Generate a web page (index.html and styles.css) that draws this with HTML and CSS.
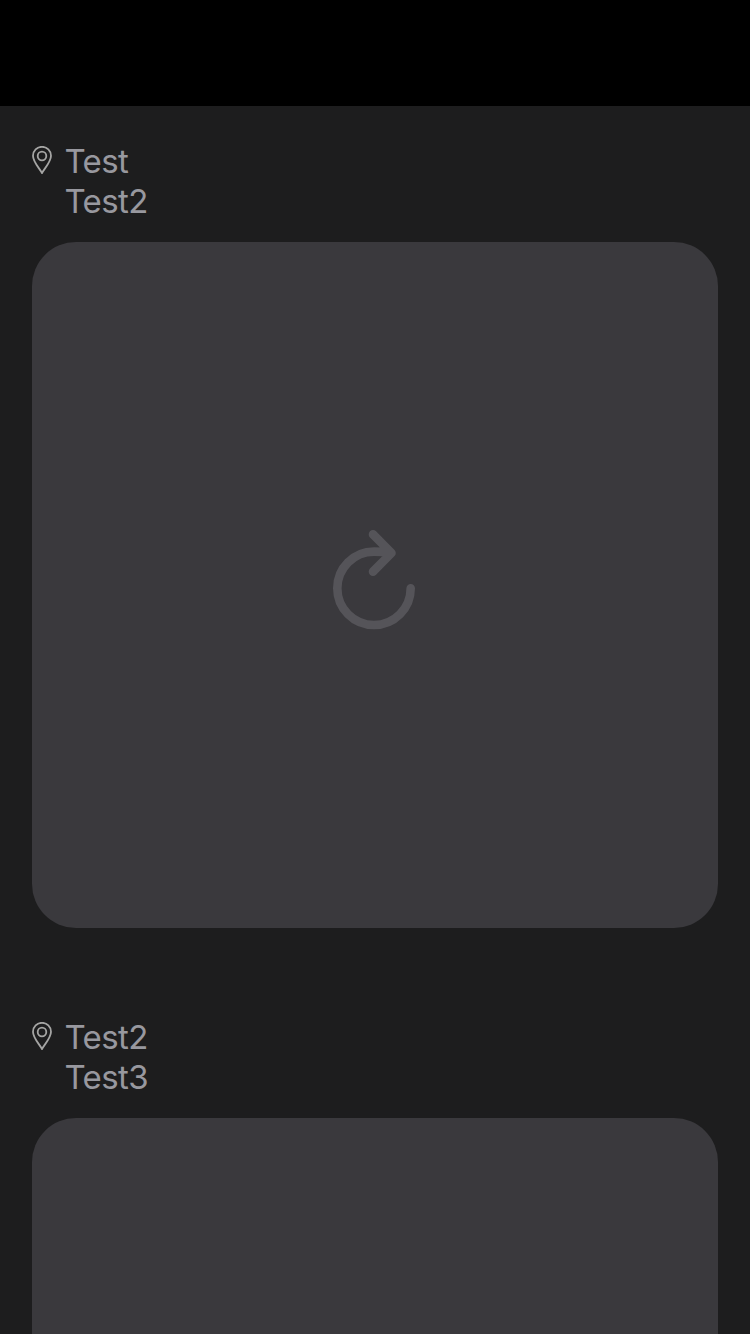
FILE: index.html
```html
<!DOCTYPE html>
<html lang="en">
<head>
<meta charset="utf-8">
<title>Locations</title>
<link rel="stylesheet" href="styles.css">
</head>
<body>
<header class="top-bar"></header>
<main class="feed">
  <article class="post">
    <div class="location">
      <svg class="pin" viewBox="0 0 20 28"><path d="M10 27C7.6 22.3 1 16.2 1 9.8a9 9 0 0 1 18 0C19 16.2 12.4 22.3 10 27Z"/><circle cx="10" cy="10" r="4.3"/></svg>
      <div class="names"><div>Test</div><div>Test2</div></div>
    </div>
    <div class="photo">
      <svg class="reload" viewBox="0 0 82 100"><path d="M77.7 58.3A36.7 36.7 0 1 1 41 21.6Q49 21.6 57 23M40 4.4L58.5 23L40 41.6"/></svg>
    </div>
  </article>
  <article class="post">
    <div class="location">
      <svg class="pin" viewBox="0 0 20 28"><path d="M10 27C7.6 22.3 1 16.2 1 9.8a9 9 0 0 1 18 0C19 16.2 12.4 22.3 10 27Z"/><circle cx="10" cy="10" r="4.3"/></svg>
      <div class="names"><div>Test2</div><div>Test3</div></div>
    </div>
    <div class="photo"></div>
  </article>
</main>
</body>
</html>
```
FILE: styles.css
```css
body {
  margin: 0;
  height: 1334px;
  overflow: hidden;
  display: flex;
  flex-direction: column;
  background: #1d1d1e;
  color: #98989f;
  font-family: Inter, "Liberation Sans", sans-serif;
}
.top-bar {
  flex: none;
  height: 106px;
  background: #000;
}
.feed {
  flex: 1;
  min-height: 0;
  overflow: hidden;
  padding: 35px 32px 0;
  display: flex;
  flex-direction: column;
  gap: 89px;
}
.post {
  flex: none;
  display: flex;
  flex-direction: column;
  gap: 20px;
}
.location {
  display: flex;
  gap: 12.5px;
  height: 81px;
}
.pin {
  width: 20px;
  height: 28px;
  margin-top: 5px;
  fill: none;
  stroke: #a5a5a4;
  stroke-width: 1.8;
}
.names {
  font-size: 33px;
  line-height: 40px;
  letter-spacing: -0.6px;
}
.photo {
  height: 686px;
  border-radius: 44px;
  background: #3a393d;
  display: flex;
  align-items: center;
  justify-content: center;
}
.reload {
  width: 82px;
  height: 100px;
  margin: 0 2px 11px 0;
  fill: none;
  stroke: #555459;
  stroke-width: 8.6;
  stroke-linecap: round;
  stroke-linejoin: round;
}
```
